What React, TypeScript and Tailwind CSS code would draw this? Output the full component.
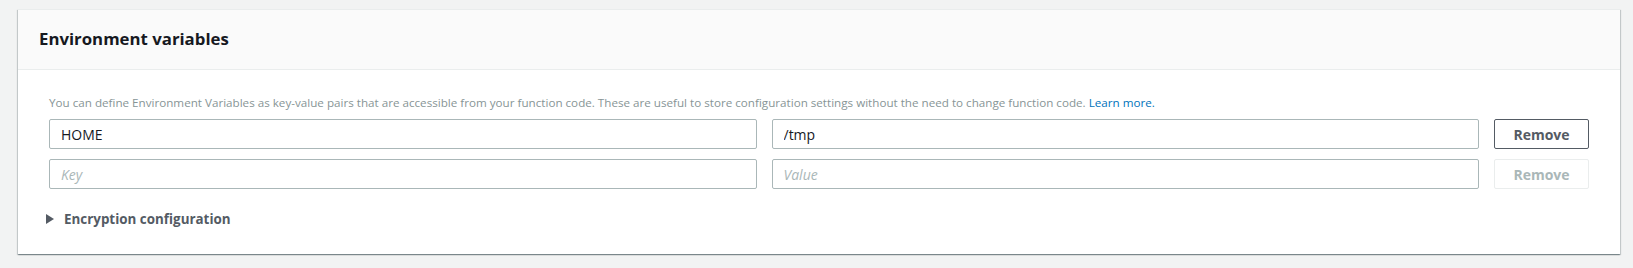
import React from 'react';

export default function App() {
  return (
    <div className="h-[268px] w-full bg-[#f2f3f3] pt-[9px] font-['Open_Sans',sans-serif]">
      <section className="ml-[18px] w-[1602px] bg-white border-t border-[#eaeded] shadow-[0_1px_1px_0_rgba(0,28,36,0.3),1px_1px_1px_0_rgba(0,28,36,0.15),-1px_1px_1px_0_rgba(0,28,36,0.15)]">
        {/* Header */}
        <div className="h-[60px] bg-[#fafafa] border-b border-[#eaeded] flex items-center px-[21px]">
          <h2 className="text-[16.8px] font-bold text-[#16191f] leading-none">Environment variables</h2>
        </div>

        {/* Body */}
        <div className="px-[31px] pt-[24px] pb-[25px]">
          <p className="text-[11.65px] leading-[18px] text-[#879596]">
            You can define Environment Variables as key-value pairs that are accessible from your function code. These are useful to store configuration settings without the need to change function code.{' '}
            <a href="#" className="text-[#0073bb]">Learn more.</a>
          </p>

          <div className="mt-[7px] flex flex-col gap-[10px]">
            <div className="grid grid-cols-[1fr_1fr_95px] gap-[15px]">
              <input
                className="h-[30px] rounded-[2px] border border-[#aab7b8] px-[11px] text-[14px] text-[#16191f] outline-none"
                defaultValue="HOME"
              />
              <input
                className="h-[30px] rounded-[2px] border border-[#aab7b8] px-[11px] text-[14px] text-[#16191f] outline-none"
                defaultValue="/tmp"
              />
              <button className="h-[30px] rounded-[2px] border border-[#545b64] bg-white text-[14px] font-bold text-[#545b64]">
                Remove
              </button>
            </div>
            <div className="grid grid-cols-[1fr_1fr_95px] gap-[15px]">
              <input
                className="h-[30px] rounded-[2px] border border-[#aab7b8] px-[11px] text-[14px] text-[#16191f] outline-none placeholder:italic placeholder:text-[#aab7b8]"
                placeholder="Key"
              />
              <input
                className="h-[30px] rounded-[2px] border border-[#aab7b8] px-[11px] text-[14px] text-[#16191f] outline-none placeholder:italic placeholder:text-[#aab7b8]"
                placeholder="Value"
              />
              <button
                disabled
                className="h-[30px] rounded-[2px] border border-[#eaeded] bg-white text-[14px] font-bold text-[#aab7b8]"
              >
                Remove
              </button>
            </div>
          </div>

          <div className="mt-[20px] flex items-center h-[20px] -ml-[3px]">
            <svg width="8" height="10" viewBox="0 0 8 10" className="fill-[#545b64]">
              <path d="M0 0 L8 5 L0 10 Z" />
            </svg>
            <span className="ml-[10px] text-[13.4px] font-bold text-[#545b64]">Encryption configuration</span>
          </div>
        </div>
      </section>
    </div>
  );
}
